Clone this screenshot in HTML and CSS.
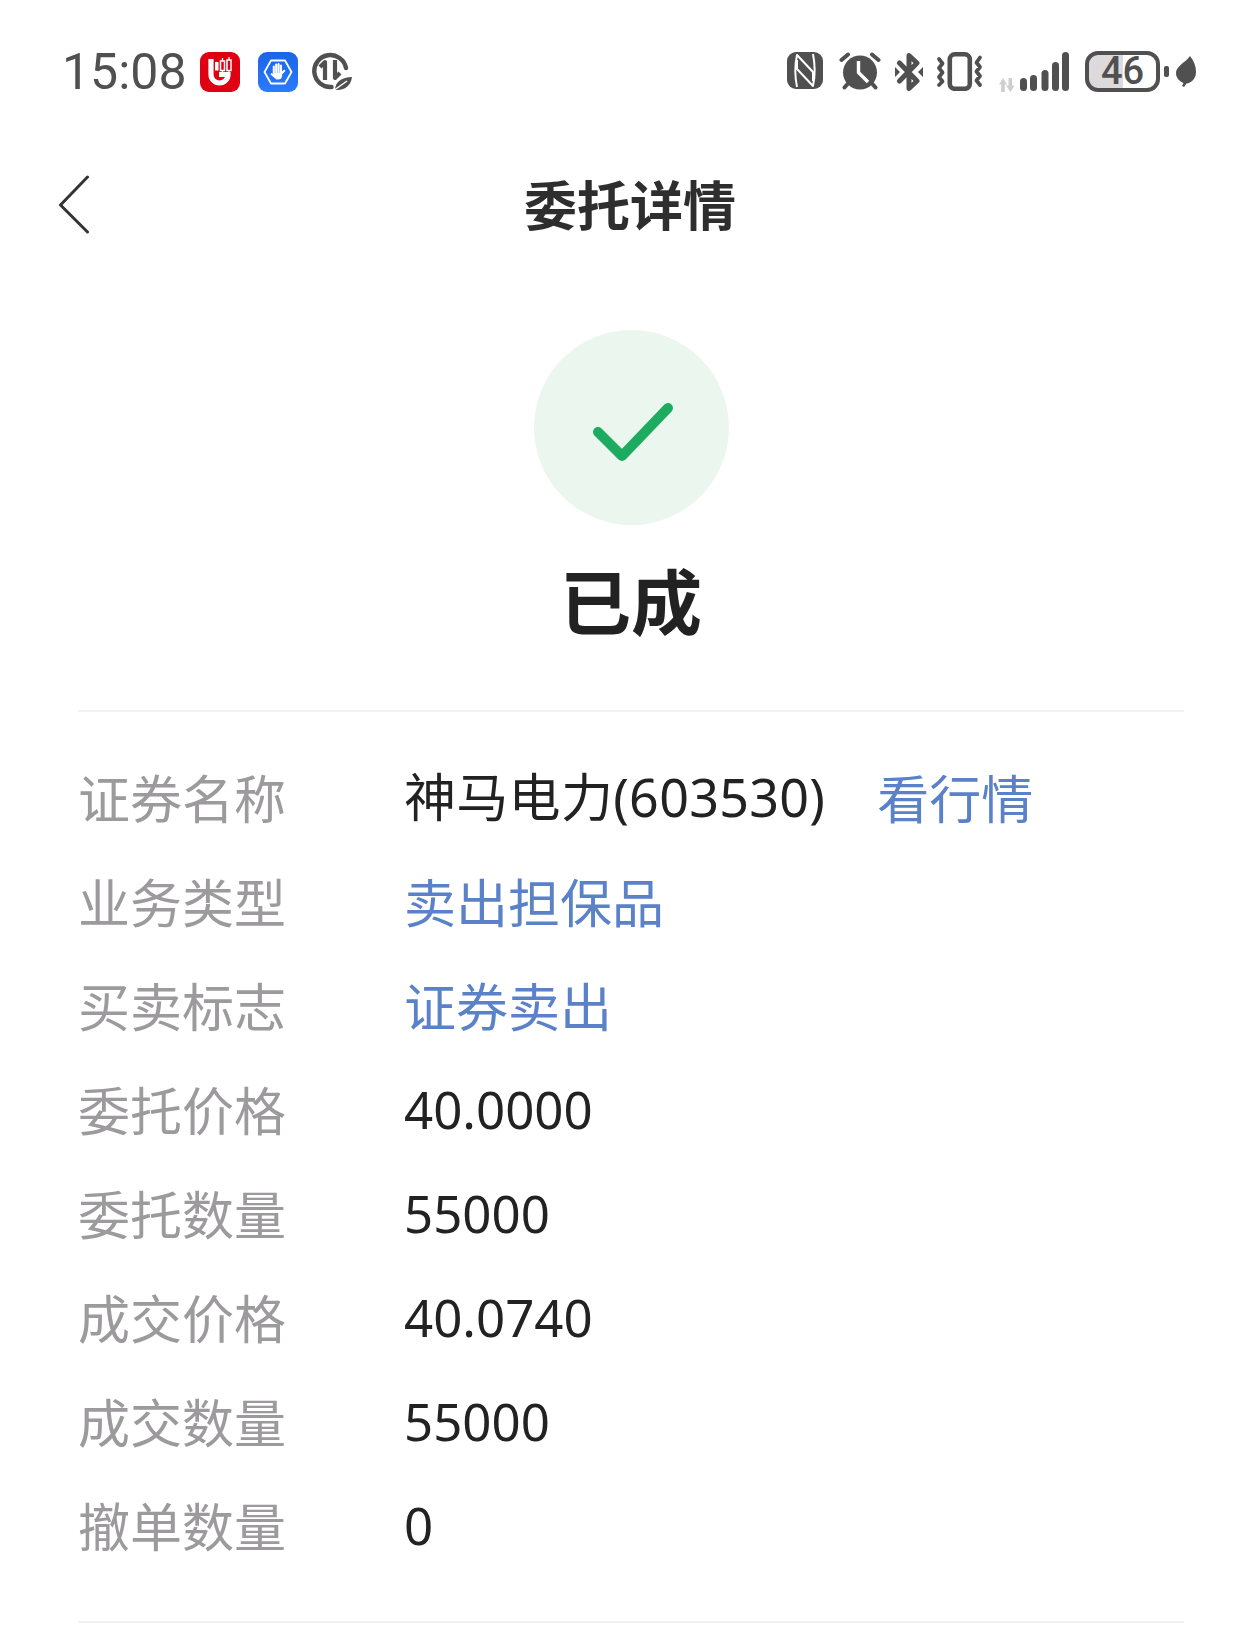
FILE: index.html
```html
<!DOCTYPE html>
<html lang="zh-CN">
<head>
  <meta charset="UTF-8">
  <title>委托详情</title>
  <link rel="stylesheet" href="styles.css">
</head>
<body>

<div class="page">

  <!-- Status bar -->
  <div class="status-bar">
    <div class="status-left">
      <span class="time">15:08</span>
      <svg class="app-icon" viewBox="0 0 40 40">
        <rect width="40" height="40" rx="9" fill="#df0011"/>
        <path d="M11 7V22.500a8.500 8.500 0 0 0 17 0H19" fill="none" stroke="#fff" stroke-width="5.200"/>
        <rect x="15" y="10" width="3.500" height="8.500" fill="#fff"/>
        <rect x="20.500" y="9" width="4" height="9.500" fill="none" stroke="#fff" stroke-width="1.500"/>
        <rect x="27" y="8" width="4" height="10.500" fill="none" stroke="#fff" stroke-width="1.500"/>
        <path d="M22.500 6v3M29 5v3M22.500 18v2M29 18v2" stroke="#fff" stroke-width="1.300"/>
      </svg>
      <svg class="app-icon" viewBox="0 0 40 40">
        <defs>
          <linearGradient id="blueBg" x1="0" y1="0" x2="0" y2="1">
            <stop offset="0" stop-color="#1b64e6"/>
            <stop offset="1" stop-color="#2a7bff"/>
          </linearGradient>
        </defs>
        <rect width="40" height="40" rx="9" fill="url(#blueBg)"/>
        <path d="M13 8.500H27L33.500 20L27 31.500H13L6.500 20Z" fill="none" stroke="#fff" stroke-width="1.800" stroke-linejoin="round"/>
        <path d="M15.800 14.500V21M18.200 12.500V20M20.600 12V20M23 13.500V21" stroke="#fff" stroke-width="2.100" stroke-linecap="round"/>
        <path d="M14.700 20.500H24.100V24a4 4 0 0 1-4 3.500H18.500L12.500 22.500L13.500 21L15.500 22Z" fill="#fff"/>
        <path d="M23.500 21.500L26.300 18.800" stroke="#fff" stroke-width="2.100" stroke-linecap="round"/>
      </svg>
      <svg class="icon-data" viewBox="0 0 40 40">
        <path d="M34 16A16 16 0 1 0 19.500 35" fill="none" stroke="#505050" stroke-width="4.400" stroke-linecap="round"/>
        <path d="M13 28V10L8 15M23 8V26L28 21" fill="none" stroke="#505050" stroke-width="4.200" stroke-linejoin="round"/>
        <path d="M23 38C23 30 30 25 40 25C39 33 33 39 23 38Z" fill="#505050"/>
        <path d="M21 39L35 29" stroke="#fff" stroke-width="1.500"/>
      </svg>
    </div>
    <div class="status-right">
      <svg class="icon-nfc" viewBox="0 0 36 37">
        <rect width="36" height="37" rx="9" fill="#505050"/>
        <path d="M10 35C8 25 8 12 10 3L26 20V29" fill="none" stroke="#fff" stroke-width="2" stroke-linejoin="round"/>
        <path d="M26 2C28 12 28 25 26 34L10 17V8" fill="none" stroke="#fff" stroke-width="2" stroke-linejoin="round"/>
      </svg>
      <svg class="icon-alarm" viewBox="0 0 42 38">
        <circle cx="21" cy="20.500" r="17" fill="#505050"/>
        <path d="M19.500 9V20.500L29 30" fill="none" stroke="#fff" stroke-width="3.400"/>
        <path d="M2.500 8L9 2.500M39.500 8L33 2.500M8.500 32L5.500 35.500M33.500 32L36.500 35.500" stroke="#505050" stroke-width="4" stroke-linecap="round"/>
      </svg>
      <svg class="icon-bt" viewBox="0 0 28 40">
        <path d="M4.500 11L22 29L14 36.500V3.500L22 11L4.500 29" fill="none" stroke="#505050" stroke-width="5" stroke-linejoin="round" stroke-linecap="round"/>
        <path d="M0 15L5 20L0 25ZM28 15L23 20L28 25Z" fill="#505050"/>
      </svg>
      <svg class="icon-vibrate" viewBox="0 0 47 39">
        <rect x="13.800" y="2.300" width="20" height="34.500" rx="5" fill="none" stroke="#505050" stroke-width="4.600"/>
        <path d="M3 7L6.500 11.500L3 16L6.500 20.500L3 25L6.500 29.500L3 33M44 5.500L40.500 10.500L44 15L40.500 19.500L44 24L40.500 28.500L44 33" fill="none" stroke="#505050" stroke-width="3.800" stroke-linejoin="round" stroke-linecap="round"/>
      </svg>
      <svg class="icon-signal" viewBox="0 0 70 40">
        <path d="M0 32.500L4 26L8 32.500H5.800V40H2.200V32.500ZM7 33.500H9.500V26H13V33.500H15.500L11.500 40Z" fill="#cfcdcf"/>
        <rect x="21" y="26" width="7" height="13" rx="3.500" fill="#505050"/>
        <rect x="31" y="23" width="7" height="16" rx="3.500" fill="#505050"/>
        <rect x="42.500" y="18" width="7" height="21" rx="3.500" fill="#505050"/>
        <rect x="53" y="10" width="7" height="29" rx="3.500" fill="#505050"/>
        <rect x="63" y="0" width="7" height="39" rx="3.500" fill="#505050"/>
      </svg>
      <div class="battery-box">
        <div class="battery"><span>46</span></div>
        <span class="battery-nub"></span>
      </div>
      <svg class="icon-leaf" viewBox="0 0 20 31">
        <path d="M14 0C18 5 20 10 20 16C20 23 15 27 10.500 27.500L8 31L6 30L7.500 27C3 25 0 21.500 0 17C0 10 9 7 14 0Z" fill="#505050"/>
      </svg>
    </div>
  </div>

  <!-- Title -->
  <div class="nav-bar">
    <svg class="back-icon" viewBox="0 0 32 60">
      <path d="M29.500 3L2.500 31L29.500 58" fill="none" stroke="#333" stroke-width="3" stroke-linecap="round" stroke-linejoin="round"/>
    </svg>
    <h1 class="nav-title">委托详情</h1>
  </div>

  <!-- Result -->
  <div class="result">
    <div class="result-circle">
      <svg class="check-icon" viewBox="0 0 80 58">
        <path d="M5 29L29 53L75 5" fill="none" stroke="#1dac5f" stroke-width="10" stroke-linecap="round" stroke-linejoin="round"/>
      </svg>
    </div>
    <h2 class="result-text">已成</h2>
  </div>

  <!-- Details -->
  <div class="detail-list">
    <div class="detail-row">
      <span class="detail-label">证券名称</span>
      <span class="detail-value stock-name">神马电力(603530)</span>
      <a class="detail-link quote-link">看行情</a>
    </div>
    <div class="detail-row">
      <span class="detail-label">业务类型</span>
      <a class="detail-link">卖出担保品</a>
    </div>
    <div class="detail-row">
      <span class="detail-label">买卖标志</span>
      <a class="detail-link">证券卖出</a>
    </div>
    <div class="detail-row">
      <span class="detail-label">委托价格</span>
      <span class="detail-value">40.0000</span>
    </div>
    <div class="detail-row">
      <span class="detail-label">委托数量</span>
      <span class="detail-value">55000</span>
    </div>
    <div class="detail-row">
      <span class="detail-label">成交价格</span>
      <span class="detail-value">40.0740</span>
    </div>
    <div class="detail-row">
      <span class="detail-label">成交数量</span>
      <span class="detail-value">55000</span>
    </div>
    <div class="detail-row">
      <span class="detail-label">撤单数量</span>
      <span class="detail-value">0</span>
    </div>
  </div>

</div>

</body>
</html>
```

FILE: styles.css
```css
html, body {
  margin: 0;
  padding: 0;
}

body {
  background: #fff;
  font-family: "Noto Sans", "Noto Sans CJK SC", sans-serif;
  color: #222;
}

.page {
  width: 1260px;
  height: 1640px;
  overflow: hidden;
}

.status-bar {
  height: 144px;
  padding: 52px 64px 0 62px;
  box-sizing: border-box;
  display: flex;
  justify-content: space-between;
  align-items: flex-start;
}

.status-left,
.status-right {
  display: flex;
  align-items: flex-start;
}

.time {
  font-family: Roboto, sans-serif;
  font-size: 50px;
  line-height: 40px;
  color: #505050;
  width: 138px;
}

.app-icon {
  width: 40px;
  height: 40px;
  margin-right: 18px;
}

.icon-data {
  width: 40px;
  height: 40px;
  margin-left: -4px;
}

.icon-nfc {
  width: 36px;
  height: 37px;
}

.icon-alarm {
  width: 42px;
  height: 38px;
  margin-left: 16px;
}

.icon-bt {
  width: 28px;
  height: 40px;
  margin-left: 14px;
}

.icon-vibrate {
  width: 47px;
  height: 39px;
  margin-left: 13px;
}

.icon-signal {
  width: 70px;
  height: 40px;
  margin-left: 16px;
}

.battery-box {
  display: flex;
  align-items: center;
  margin-left: 16px;
  margin-top: -1px;
}

.battery {
  width: 75px;
  height: 41px;
  box-sizing: border-box;
  border: 4px solid #505050;
  border-radius: 13px;
  background: linear-gradient(to right, #dcdadc 0, #dcdadc 34px, #fff 34px);
  display: flex;
  align-items: center;
  justify-content: center;
  font-family: Roboto, sans-serif;
  font-size: 38px;
  font-weight: 500;
  line-height: 33px;
  color: #505050;
}

.battery-nub {
  width: 5px;
  height: 11px;
  margin-left: 4px;
  border-radius: 2px;
  background: #505050;
}

.icon-leaf {
  width: 20px;
  height: 31px;
  margin-left: 7px;
  margin-top: 4px;
}

.nav-bar {
  height: 122px;
  position: relative;
  display: flex;
  align-items: center;
  justify-content: center;
}

.back-icon {
  position: absolute;
  left: 58px;
  top: 30px;
  width: 32px;
  height: 60px;
}

.nav-title {
  margin: -4px 0 0 0;
  font-family: "Noto Sans CJK SC", sans-serif;
  font-size: 53px;
  line-height: 70px;
  font-weight: 700;
  color: #2e2e2e;
}

.result {
  margin: 64px 76px 0 78px;
  padding-bottom: 72px;
  border-bottom: 2px solid #f1f1f1;
  display: flex;
  flex-direction: column;
  align-items: center;
}

.result-circle {
  width: 195px;
  height: 195px;
  border-radius: 50%;
  background: #ebf6ee;
  display: flex;
  align-items: center;
  justify-content: center;
}

.check-icon {
  width: 80px;
  height: 58px;
  margin-top: 8px;
  margin-left: 4px;
}

.result-text {
  margin: 33px 0 0 0;
  font-family: "Noto Sans CJK SC", sans-serif;
  font-size: 71px;
  line-height: 80px;
  font-weight: 700;
  color: #222;
}

.detail-list {
  margin: 0 76px 0 78px;
  padding: 33px 0 44px 0;
  border-bottom: 2px solid #f1f1f1;
}

.detail-row {
  height: 104px;
  display: flex;
  align-items: center;
  font-size: 51px;
  line-height: 70px;
}

.detail-label {
  width: 326px;
  color: #9c9a9c;
  font-family: "Noto Sans CJK SC", sans-serif;
  font-size: 52px;
}

.detail-value {
  color: #222;
}

.stock-name {
  font-size: 52px;
  letter-spacing: 0.3px;
}

.detail-link {
  color: #5b82c8;
  font-family: "Noto Sans CJK SC", sans-serif;
  font-size: 52px;
}

.quote-link {
  margin-left: 52px;
}
```
